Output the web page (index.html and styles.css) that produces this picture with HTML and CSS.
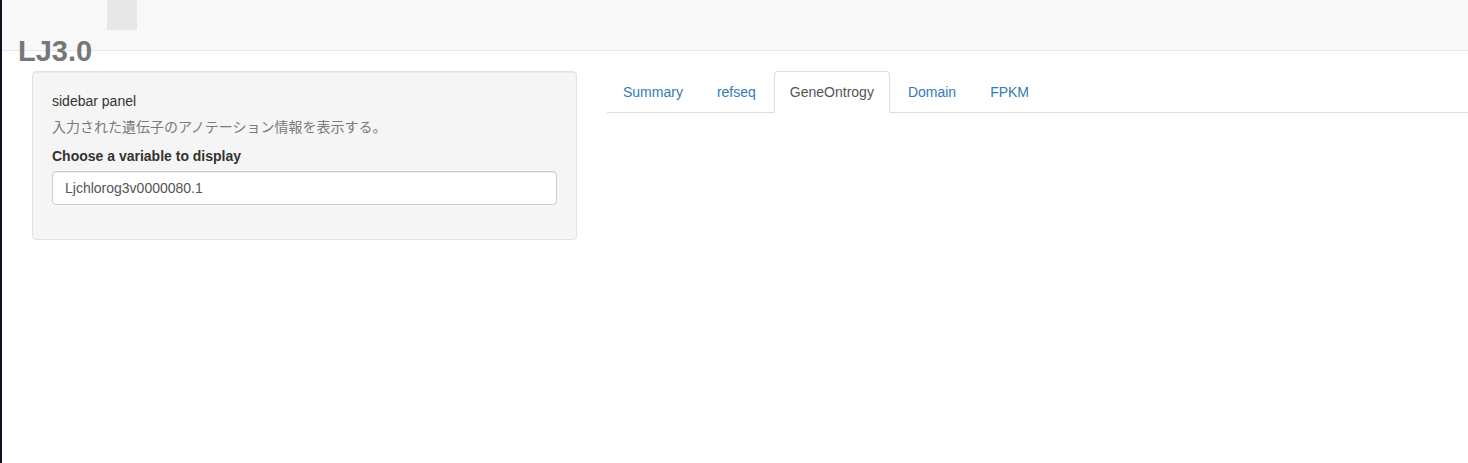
FILE: index.html
```html
<!DOCTYPE html>
<html lang="ja">
<head>
<meta charset="utf-8">
<title>LJ3.0</title>
<link rel="stylesheet" href="styles.css">
</head>
<body>
<div class="page">
  <header class="navbar">
    <div class="nav-block"></div>
  </header>
  <h2 class="app-title">LJ3.0</h2>
  <div class="layout">
    <aside class="well">
      <div class="well-line">sidebar panel</div>
      <p class="help">入力された遺伝子のアノテーション情報を表示する。</p>
      <label class="field-label" for="gene">Choose a variable to display</label>
      <input class="field-input" id="gene" type="text" value="Ljchlorog3v0000080.1">
    </aside>
    <main class="main">
      <ul class="tabs">
        <li class="tab"><a href="#">Summary</a></li>
        <li class="tab"><a href="#">refseq</a></li>
        <li class="tab active"><a href="#">GeneOntrogy</a></li>
        <li class="tab"><a href="#">Domain</a></li>
        <li class="tab"><a href="#">FPKM</a></li>
      </ul>
    </main>
  </div>
</div>
</body>
</html>
```

FILE: styles.css
```css
html, body {
  margin: 0;
  padding: 0;
  height: 100%;
  background: #ffffff;
}

body {
  font-family: "Liberation Sans", Arial, "Noto Sans CJK JP", sans-serif;
  font-size: 14px;
  line-height: 20px;
  color: #333333;
}

.page {
  min-height: 100vh;
  border-left: 2px solid #0c1120;
  box-sizing: border-box;
}

.navbar {
  height: 50px;
  background: #f8f8f8;
  border-bottom: 1px solid #e7e7e7;
  padding-left: 105px;
}

.nav-block {
  width: 30px;
  height: 30px;
  background: #e7e7e7;
}

.app-title {
  margin: -15px 0 5px 16px;
  font-size: 29px;
  line-height: 30px;
  font-weight: bold;
  color: #777777;
  position: relative;
}

.layout {
  display: flex;
  align-items: flex-start;
  padding-left: 30px;
  gap: 30px;
}

.well {
  width: 545px;
  box-sizing: border-box;
  background: #f5f5f5;
  border: 1px solid #e3e3e3;
  border-radius: 4px;
  box-shadow: inset 0 1px 1px rgba(0, 0, 0, 0.05);
  padding: 19px 19px 34px;
}

.well-line {
  color: #333333;
}

.help {
  margin: 6px 0 9px;
  color: #7a7a7a;
  font-family: "Liberation Sans", "Noto Sans CJK JP", sans-serif;
}

.field-label {
  display: block;
  font-weight: bold;
  margin-bottom: 5px;
}

.field-input {
  display: block;
  width: 100%;
  height: 34px;
  box-sizing: border-box;
  padding: 6px 12px;
  font-family: "Liberation Sans", Arial, sans-serif;
  font-size: 14px;
  color: #555555;
  background: #ffffff;
  border: 1px solid #cccccc;
  border-radius: 4px;
  box-shadow: inset 0 1px 1px rgba(0, 0, 0, 0.075);
}

.main {
  flex: 1;
}

.tabs {
  display: flex;
  list-style: none;
  margin: 0;
  padding: 0;
  border-bottom: 1px solid #dddddd;
}

.tab {
  margin-bottom: -1px;
}

.tab a {
  display: block;
  padding: 10px 15px;
  margin-right: 2px;
  line-height: 20px;
  border: 1px solid transparent;
  border-radius: 4px 4px 0 0;
  color: #337ab7;
  text-decoration: none;
}

.tab.active a {
  color: #555555;
  background: #ffffff;
  border-color: #dddddd #dddddd transparent;
}
```
